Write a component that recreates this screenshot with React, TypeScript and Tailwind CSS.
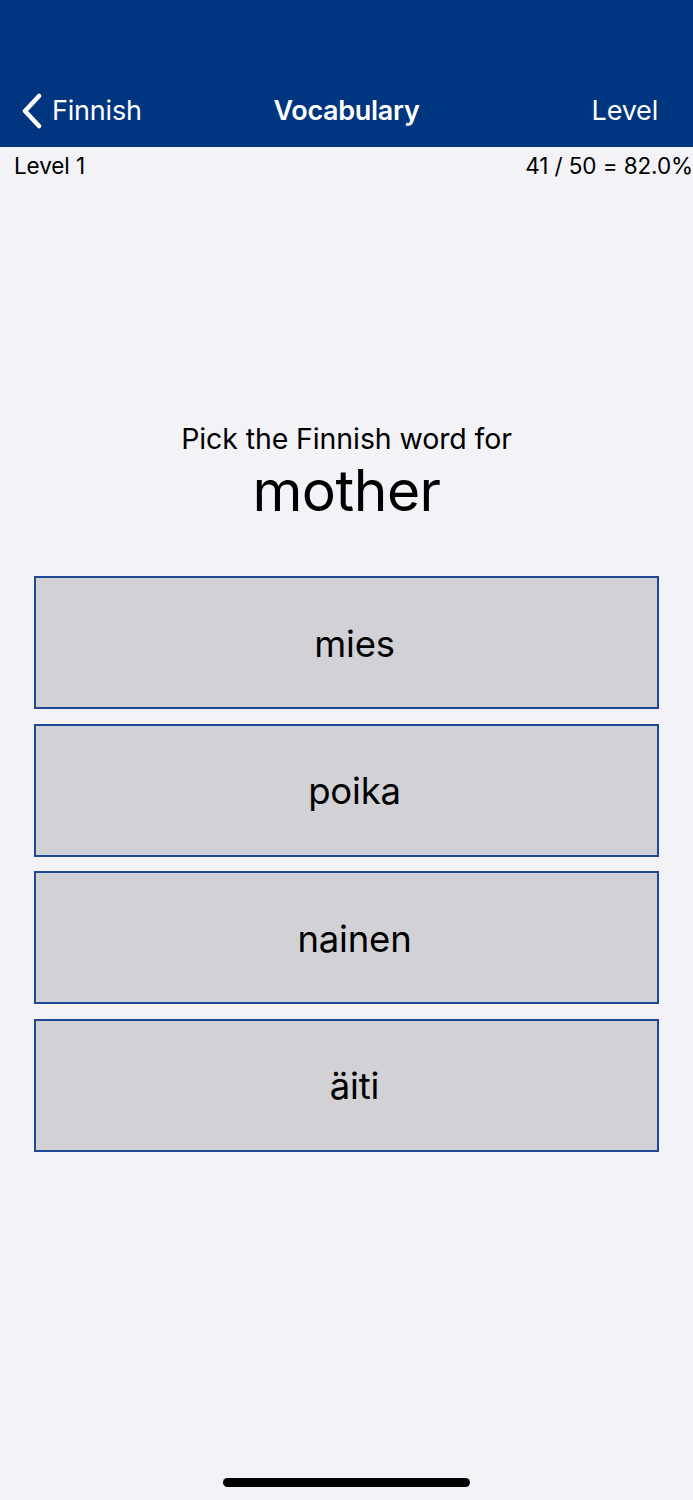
import React from "react";

const choices = ["mies", "poika", "nainen", "äiti"];

export default function App() {
  return (
    <div
      className="relative min-h-[1500px] w-[693px] bg-[#f2f2f7] text-black"
      style={{ fontFamily: "Inter, 'Noto Sans', sans-serif" }}
    >
      {/* Nav bar */}
      <header className="h-[147px] bg-[#003580] flex flex-col justify-end">
        <div className="relative h-[72px] flex items-center justify-between px-[20px] text-white">
          <div className="flex items-center gap-[8px]">
            <svg width="24" height="36" viewBox="0 0 24 36" fill="none">
              <path
                d="M19 3 L5 18 L19 33"
                stroke="white"
                strokeWidth="4.5"
                strokeLinecap="round"
                strokeLinejoin="round"
              />
            </svg>
            <span className="text-[27px] tracking-[-0.2px]">Finnish</span>
          </div>
          <span className="absolute left-1/2 -translate-x-1/2 text-[27px] font-semibold tracking-[-0.3px]">
            Vocabulary
          </span>
          <span className="text-[27px] mr-[15px] tracking-[-0.2px]">Level</span>
        </div>
      </header>

      {/* Status row */}
      <div className="h-[37px] flex items-center justify-between pl-[14px] text-[22.5px] tracking-[-0.1px]">
        <span>Level 1</span>
        <span>41 / 50 = 82.0%</span>
      </div>

      {/* Question */}
      <div className="mt-[237px] flex flex-col items-center">
        <div className="text-[28.5px] leading-[36px] tracking-[-0.1px]">Pick the Finnish word for</div>
        <div className="text-[57px] leading-[68px] tracking-[-0.5px]">mother</div>
      </div>

      {/* Choices */}
      <div className="mt-[51px] mx-[34px] flex flex-col gap-[14.5px]">
        {choices.map((c) => (
          <button
            key={c}
            className="h-[133px] w-full bg-[#d1d1d6] border-2 border-[#1f4796] flex items-center justify-center pl-[16px] pt-[3px] text-[36.5px] tracking-[-0.2px]"
          >
            {c}
          </button>
        ))}
      </div>

      {/* Home indicator */}
      <div className="absolute left-[223px] top-[1478px] w-[247px] h-[9px] rounded-full bg-black" />
    </div>
  );
}
